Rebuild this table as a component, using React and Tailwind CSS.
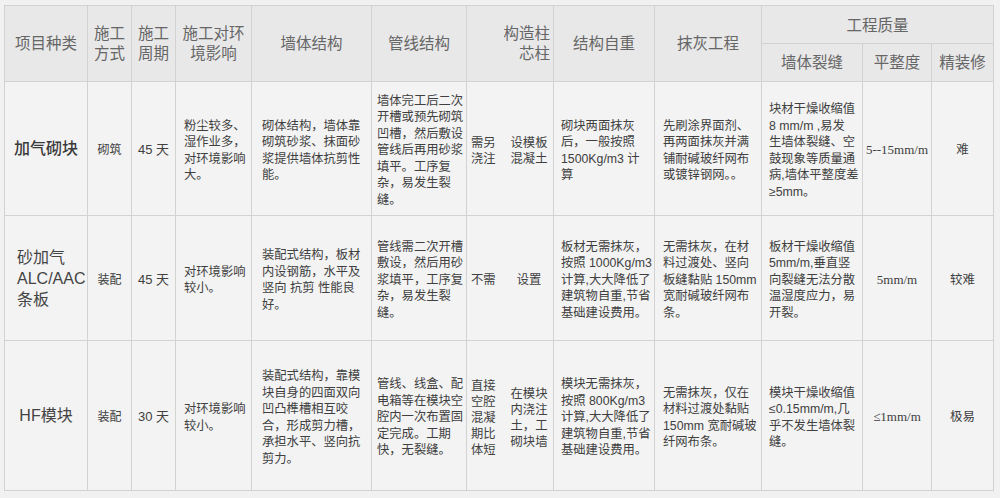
const font = { fontFamily: '"Liberation Sans", "Noto Sans CJK SC", sans-serif' };

const rows = [
  {
    h: "h-[134px]",
    name: "加气砌块",
    nameClass: "text-center font-medium text-[#3a3a3a]",
    way: "砌筑",
    days: "45 天",
    env: ["粉尘较多、", "湿作业多，", "对环境影响", "大。"],
    wall: ["砌体结构，墙体靠", "砌筑砂浆、抹面砂", "浆提供墙体抗剪性", "能。"],
    pipe: ["墙体完工后二次", "开槽或预先砌筑", "凹槽，然后敷设", "管线后再用砂浆", "填平。工序复", "杂，易发生裂", "缝。"],
    colA: ["需另", "浇注"],
    colB: ["设模板", "混凝土"],
    weight: ["砌块两面抹灰", "后，一般按照", "1500Kg/m3 计", "算"],
    plaster: ["先刷涂界面剂、", "再两面抹灰并满", "铺耐碱玻纤网布", "或镀锌钢网。。"],
    crack: ["块材干燥收缩值", "8 mm/m ,易发", "生墙体裂缝、空", "鼓现象等质量通", "病,墙体平整度差", "≥5mm。"],
    flat: "5--15mm/m",
    finish: "难",
  },
  {
    h: "h-[125px]",
    name: ["砂加气", "ALC/AAC", "条板"],
    nameClass: "text-left pl-[12px] text-[#444] text-[15.5px]",
    way: "装配",
    days: "45 天",
    env: ["对环境影响", "较小。"],
    wall: ["装配式结构，板材", "内设钢筋，水平及", "竖向 抗剪 性能良", "好。"],
    pipe: ["管线需二次开槽", "敷设，然后用砂", "浆填平，工序复", "杂，易发生裂", "缝。"],
    colA: ["不需"],
    colB: ["设置"],
    weight: ["板材无需抹灰，", "按照 1000Kg/m3", "计算,大大降低了", "建筑物自重,节省", "基础建设费用。"],
    plaster: ["无需抹灰，在材", "料过渡处、竖向", "板缝黏贴 150mm", "宽耐碱玻纤网布", "条。"],
    crack: ["板材干燥收缩值", "5mm/m,垂直竖", "向裂缝无法分散", "温湿度应力，易", "开裂。"],
    flat: "5mm/m",
    finish: "较难",
  },
  {
    h: "h-[150px]",
    name: "HF模块",
    nameClass: "text-center text-[#444] text-[16px]",
    way: "装配",
    days: "30 天",
    env: ["对环境影响", "较小。"],
    wall: ["装配式结构，靠模", "块自身的四面双向", "凹凸榫槽相互咬", "合，形成剪力槽，", "承担水平、竖向抗", "剪力。"],
    pipe: ["管线、线盒、配", "电箱等在模块空", "腔内一次布置固", "定完成。工期", "快，无裂缝。"],
    colA: ["直接", "空腔", "混凝", "期比", "体短"],
    colB: ["在模块", "内浇注", "土，工", "砌块墙"],
    weight: ["模块无需抹灰，", "按照 800Kg/m3", "计算,大大降低了", "建筑物自重,节省", "基础建设费用。"],
    plaster: ["无需抹灰，仅在", "材料过渡处黏贴", "150mm 宽耐碱玻", "纤网布条。"],
    crack: ["模块干燥收缩值", "≤0.15mm/m,几", "乎不发生墙体裂", "缝。"],
    flat: "≤1mm/m",
    finish: "极易",
  },
];

function Lines({ items }) {
  const list = Array.isArray(items) ? items : [items];
  return list.map((t, i) => (
    <span key={i} className="block whitespace-nowrap">
      {t}
    </span>
  ));
}

const th = "border border-[#d2d2d2] font-normal text-[15.5px] leading-[20px] text-[#666] align-middle";
const td = "border border-[#d2d2d2] align-middle text-[12.3px] leading-[16.5px] text-[#404040] pt-1";

export default function App() {
  return (
    <div className="w-[1000px] h-[498px] bg-[#f1f1f1] pt-[5px] pl-[4px]" style={font}>
      <table className="table-fixed border-collapse w-[989px]">
        <colgroup>
          <col className="w-[83px]" />
          <col className="w-[44px]" />
          <col className="w-[44px]" />
          <col className="w-[76px]" />
          <col className="w-[120px]" />
          <col className="w-[95px]" />
          <col className="w-[87px]" />
          <col className="w-[101px]" />
          <col className="w-[107px]" />
          <col className="w-[101px]" />
          <col className="w-[69px]" />
          <col className="w-[62px]" />
        </colgroup>
        <thead className="bg-[#e8e8e9]">
          <tr className="h-[38px]">
            <th rowSpan={2} className={th}>项目种类</th>
            <th rowSpan={2} className={th}>施工<br />方式</th>
            <th rowSpan={2} className={th}>施工<br />周期</th>
            <th rowSpan={2} className={th}>施工对环<br />境影响</th>
            <th rowSpan={2} className={th}>墙体结构</th>
            <th rowSpan={2} className={th}>管线结构</th>
            <th rowSpan={2} className={`${th} text-right pr-[3px]`}>构造柱<br />芯柱</th>
            <th rowSpan={2} className={th}>结构自重</th>
            <th rowSpan={2} className={th}>抹灰工程</th>
            <th colSpan={3} className={`${th} pt-[2px]`}>工程质量</th>
          </tr>
          <tr className="h-[38px]">
            <th className={th}>墙体裂缝</th>
            <th className={th}>平整度</th>
            <th className={th}>精装修</th>
          </tr>
        </thead>
        <tbody className="bg-[#f3f3f3]">
          {rows.map((r, i) => (
            <tr key={i} className={r.h}>
              <td className={`border border-[#d2d2d2] align-middle text-[16px] leading-[21px] ${r.nameClass}`}>
                <Lines items={r.name} />
              </td>
              <td className={`${td} text-center text-[12px]`}>{r.way}</td>
              <td className={`${td} text-center text-[13px]`}>{r.days}</td>
              <td className={`${td} pl-[8px]`}><Lines items={r.env} /></td>
              <td className={`${td} pl-[10px]`}><Lines items={r.wall} /></td>
              <td className={`${td} pl-[5px]`}><Lines items={r.pipe} /></td>
              <td className={`${td} pl-[4px]`}>
                <div className="flex items-center">
                  <div className="w-[28px] leading-[16px]"><Lines items={r.colA} /></div>
                  <div className="flex-1 pl-[6px] text-center leading-[16px]"><Lines items={r.colB} /></div>
                </div>
              </td>
              <td className={`${td} pl-[7px]`}><Lines items={r.weight} /></td>
              <td className={`${td} pl-[8px]`}><Lines items={r.plaster} /></td>
              <td className={`${td} pl-[7px]`}><Lines items={r.crack} /></td>
              <td className={`${td} text-center text-[13px]`} style={{ fontFamily: '"Liberation Serif", "Noto Sans CJK SC", serif' }}>
                {r.flat}
              </td>
              <td className={`${td} text-center text-[12.5px]`}>{r.finish}</td>
            </tr>
          ))}
        </tbody>
      </table>
    </div>
  );
}
